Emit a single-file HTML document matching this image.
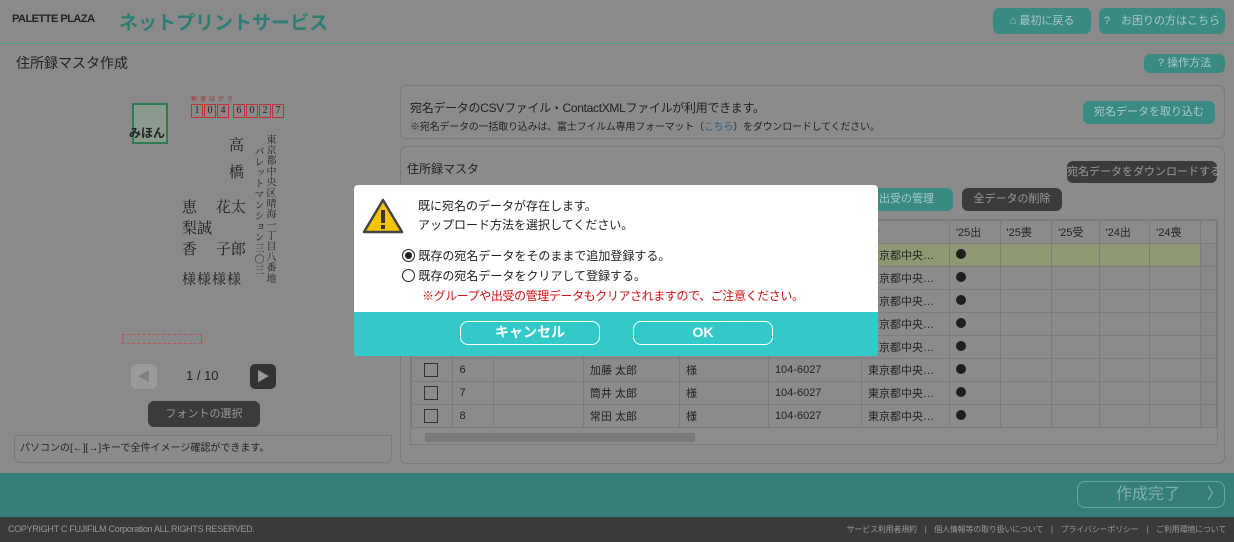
<!DOCTYPE html>
<html><head><meta charset="utf-8"><style>
*{box-sizing:border-box;margin:0;padding:0}
body{width:1234px;height:542px;overflow:hidden;background:#8a8a8a;font-family:"Liberation Sans","Noto Sans CJK JP",sans-serif;color:#222;position:relative}
.a{position:absolute;white-space:nowrap}
.tb{background:#3a8a84;color:#a9c9c6;border-radius:6px;font-size:11px;text-align:center}
.db{background:#3b3b3b;color:#9a9a9a;border-radius:6px;font-size:11px;text-align:center}
.panel{border:1px solid #7a7a7a;border-radius:7px;background:#8b8b8b}
table{border-collapse:collapse;font-size:11px;color:#222}
td{border:1px solid #7c7c7c;height:23px;padding-left:6px;white-space:nowrap;overflow:hidden}
.dot{display:inline-block;width:10px;height:10px;border-radius:50%;background:#1e1e1e}
.cb{display:inline-block;width:14px;height:14px;border:1px solid #333;vertical-align:middle}
.v{writing-mode:vertical-rl;font-family:"Noto Serif CJK SC","Liberation Serif",serif;color:#1f1f1f}
.sf{font-family:"Noto Serif CJK SC","Liberation Serif",serif;color:#1f1f1f}
</style></head><body>
<div class="a" style="left:12px;top:13px;font-weight:bold;font-size:11px;color:#222;letter-spacing:-0.5px">PALETTE PLAZA</div>
<div class="a" style="left:119px;top:8px;font-weight:bold;font-size:19px;color:#2e7c76">ネットプリントサービス</div>
<div class="a tb" style="left:993px;top:8px;width:98px;height:26px;line-height:26px">⌂ 最初に戻る</div>
<div class="a tb" style="left:1099px;top:8px;width:126px;height:26px;line-height:26px">?　お困りの方はこちら</div>
<div class="a" style="left:0;top:43px;width:1234px;height:1px;background:#4e9a8f"></div>
<div class="a" style="left:16px;top:53px;font-size:14px;color:#222">住所録マスタ作成</div>
<div class="a tb" style="left:1144px;top:54px;width:81px;height:19px;line-height:19px">?  操作方法</div>

<!-- postcard -->
<div class="a" style="left:132px;top:103px;width:36px;height:41px;border:2px solid #2d7c51;background:#8b9a8f"></div>
<div class="a" style="left:129px;top:124px;font-size:12px;font-weight:bold;color:#222">みほん</div>
<div class="a" style="left:191px;top:94px;font-size:6px;color:#a33;letter-spacing:3px">郵便はがき</div>
<div class="a" style="left:191px;top:104px;display:flex;gap:1px">
<span style="border:1px solid #b33;width:12px;height:14px;font-size:10px;text-align:center;font-family:'Liberation Serif'">1</span><span style="border:1px solid #b33;width:12px;height:14px;font-size:10px;text-align:center;font-family:'Liberation Serif'">0</span><span style="border:1px solid #b33;width:12px;height:14px;font-size:10px;text-align:center;font-family:'Liberation Serif'">4</span><span style="width:2px"></span><span style="border:1px solid #b33;width:12px;height:14px;font-size:10px;text-align:center;font-family:'Liberation Serif'">6</span><span style="border:1px solid #b33;width:12px;height:14px;font-size:10px;text-align:center;font-family:'Liberation Serif'">0</span><span style="border:1px solid #b33;width:12px;height:14px;font-size:10px;text-align:center;font-family:'Liberation Serif'">2</span><span style="border:1px solid #b33;width:12px;height:14px;font-size:10px;text-align:center;font-family:'Liberation Serif'">7</span></div>
<div class="a v" style="left:266px;top:134px;height:160px;font-size:10px;line-height:11px;letter-spacing:0.7px">東京都中央区晴海一丁目八番地</div>
<div class="a v" style="left:254px;top:146px;height:160px;font-size:10px;line-height:11px;letter-spacing:0.8px">パレットマンション三〇三</div>
<div class="a sf" style="left:229px;top:134px;font-size:15px">高</div>
<div class="a sf" style="left:229px;top:161px;font-size:15px">橋</div>
<div class="a sf" style="left:182px;top:196px;font-size:15px;line-height:21px">恵　 花太<br>梨誠<br>香　 子郎</div>
<div class="a sf" style="left:182px;top:269px;font-size:14px;letter-spacing:1px">様様様様</div>
<div class="a" style="left:122px;top:334px;width:80px;height:10px;border:1px dashed #b55"></div>
<div class="a" style="left:131px;top:364px;width:26px;height:25px;border-radius:5px;background:#9a9a9a;color:#7f7f7f;font-size:13px;text-align:center;line-height:25px">◀</div>
<div class="a" style="left:186px;top:368px;font-size:13px;color:#222">1 / 10</div>
<div class="a" style="left:250px;top:364px;width:26px;height:25px;border-radius:5px;background:#333;color:#999;font-size:13px;text-align:center;line-height:25px">▶</div>
<div class="a db" style="left:148px;top:401px;width:112px;height:26px;line-height:26px">フォントの選択</div>
<div class="a panel" style="left:14px;top:435px;width:378px;height:28px;border-top-left-radius:0;border-top-right-radius:0"></div>
<div class="a" style="left:20px;top:439px;font-size:10px">パソコンの[←][→]キーで全件イメージ確認ができます。</div>

<!-- right panels -->
<div class="a panel" style="left:400px;top:85px;width:825px;height:54px"></div>
<div class="a" style="left:410px;top:99px;font-size:12px;letter-spacing:-0.3px">宛名データのCSVファイル・ContactXMLファイルが利用できます。</div>
<div class="a" style="left:410px;top:118px;font-size:10px;letter-spacing:-0.2px">※宛名データの一括取り込みは、富士フイルム専用フォーマット（<span style="color:#2a5a8a">こちら</span>）をダウンロードしてください。</div>
<div class="a tb" style="left:1083px;top:101px;width:132px;height:23px;line-height:23px">宛名データを取り込む</div>
<div class="a panel" style="left:400px;top:146px;width:825px;height:318px"></div>
<div class="a" style="left:407px;top:160px;font-size:12px">住所録マスタ</div>
<div class="a db" style="left:1067px;top:161px;width:150px;height:22px;line-height:22px">宛名データをダウンロードする</div>
<div class="a tb" style="left:860px;top:188px;width:93px;height:23px;line-height:23px">出受の管理</div>
<div class="a db" style="left:962px;top:188px;width:100px;height:23px;line-height:23px">全データの削除</div>
<div class="a" style="left:410px;top:219px;width:808px;height:226px;border:1px solid #7c7c7c;overflow:hidden">
<table style="width:806px;table-layout:fixed">
<colgroup><col style="width:41px"><col style="width:40px"><col style="width:89px"><col style="width:95px"><col style="width:88px"><col style="width:92px"><col style="width:87px"><col style="width:50px"><col style="width:51px"><col style="width:47px"><col style="width:50px"><col style="width:50px"><col style="width:16px"></colgroup>
<tr><td></td><td></td><td></td><td></td><td></td><td></td><td>所</td><td>'25出</td><td>'25喪</td><td>'25受</td><td>'24出</td><td>'24喪</td><td></td></tr>
<tr style="background:#8e9974"><td></td><td></td><td></td><td></td><td></td><td></td><td>東京都中央…</td><td><span class="dot"></span></td><td></td><td></td><td></td><td></td><td style="background:#888"></td></tr>
<tr><td></td><td></td><td></td><td></td><td></td><td></td><td>東京都中央…</td><td><span class="dot"></span></td><td></td><td></td><td></td><td></td><td style="background:#888"></td></tr>
<tr><td></td><td></td><td></td><td></td><td></td><td></td><td>東京都中央…</td><td><span class="dot"></span></td><td></td><td></td><td></td><td></td><td style="background:#888"></td></tr>
<tr><td></td><td></td><td></td><td></td><td></td><td></td><td>東京都中央…</td><td><span class="dot"></span></td><td></td><td></td><td></td><td></td><td style="background:#888"></td></tr>
<tr><td></td><td></td><td></td><td></td><td></td><td></td><td>東京都中央…</td><td><span class="dot"></span></td><td></td><td></td><td></td><td></td><td style="background:#888"></td></tr>
<tr><td style="padding-left:12px"><span class="cb"></span></td><td>6</td><td></td><td>加藤 太郎</td><td>様</td><td>104-6027</td><td>東京都中央…</td><td><span class="dot"></span></td><td></td><td></td><td></td><td></td><td style="background:#888"></td></tr>
<tr><td style="padding-left:12px"><span class="cb"></span></td><td>7</td><td></td><td>筒井 太郎</td><td>様</td><td>104-6027</td><td>東京都中央…</td><td><span class="dot"></span></td><td></td><td></td><td></td><td></td><td style="background:#888"></td></tr>
<tr><td style="padding-left:12px"><span class="cb"></span></td><td>8</td><td></td><td>常田 太郎</td><td>様</td><td>104-6027</td><td>東京都中央…</td><td><span class="dot"></span></td><td></td><td></td><td></td><td></td><td style="background:#888"></td></tr>
</table>
<div class="a" style="left:0;top:210px;width:806px;height:14px;background:#8d8d8d"></div>
<div class="a" style="left:14px;top:213px;width:270px;height:9px;background:#7a7a7a"></div>
</div>

<div class="a" style="left:0;top:473px;width:1234px;height:44px;background:#357e79"></div>
<div class="a" style="left:1077px;top:481px;width:148px;height:27px;border:1px solid #6aa6a1;border-radius:8px;color:#7fb0ac;font-size:16px;line-height:25px;padding-left:38px">作成完了 <span style="margin-left:22px">〉</span></div>
<div class="a" style="left:0;top:517px;width:1234px;height:25px;background:#3a3a3a"></div>
<div class="a" style="left:8px;top:524px;font-size:9px;color:#999;letter-spacing:-0.3px">COPYRIGHT C FUJIFILM Corporation ALL RIGHTS RESERVED.</div>
<div class="a" style="right:8px;top:524px;font-size:8px;color:#999;letter-spacing:-0.2px">サービス利用者規約　|　個人情報等の取り扱いについて　|　プライバシーポリシー　|　ご利用環境について</div>

<!-- dialog -->
<div class="a" style="left:354px;top:185px;width:524px;height:171px;background:#fff;border-radius:4px;overflow:hidden">
<svg class="a" style="left:8px;top:13px" width="42" height="36" viewBox="0 0 42 36"><path d="M21 2 L40 34 L2 34 Z" fill="#f5c400" stroke="#444" stroke-width="2.5" stroke-linejoin="round"/><rect x="19" y="12" width="4" height="13" fill="#333"/><rect x="19" y="27" width="4" height="4" fill="#333"/></svg>
<div class="a" style="left:64px;top:12px;font-size:12px;line-height:19px;color:#222">既に宛名のデータが存在します。<br>アップロード方法を選択してください。</div>
<div class="a" style="left:48px;top:61px;font-size:12px;line-height:20px;color:#222">
<div><span style="display:inline-block;width:13px;height:13px;border:1px solid #222;border-radius:50%;vertical-align:-2px;position:relative"><span style="position:absolute;left:2px;top:2px;width:7px;height:7px;border-radius:50%;background:#222"></span></span> 既存の宛名データをそのままで追加登録する。</div>
<div><span style="display:inline-block;width:13px;height:13px;border:1px solid #222;border-radius:50%;vertical-align:-2px"></span> 既存の宛名データをクリアして登録する。</div>
<div style="color:#d01010;padding-left:20px;letter-spacing:-0.4px">※グループや出受の管理データもクリアされますので、ご注意ください。</div></div>
<div class="a" style="left:0;top:127px;width:524px;height:44px;background:#33c9c9"></div>
<div class="a" style="left:106px;top:136px;width:140px;height:24px;border:1.5px solid #fff;border-radius:8px;color:#fff;font-size:14px;font-weight:bold;text-align:center;line-height:21px">キャンセル</div>
<div class="a" style="left:279px;top:136px;width:140px;height:24px;border:1.5px solid #fff;border-radius:8px;color:#fff;font-size:14px;font-weight:bold;text-align:center;line-height:21px">OK</div>
</div>
</body></html>
